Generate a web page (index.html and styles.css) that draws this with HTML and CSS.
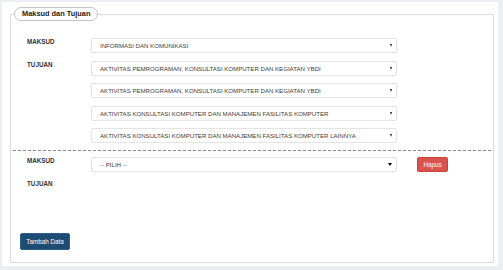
FILE: index.html
```html
<!DOCTYPE html>
<html lang="id">
<head>
    <meta charset="UTF-8">
    <title>Maksud dan Tujuan</title>
    <link rel="stylesheet" href="styles.css">
</head>
<body>
    <div class="sheet">
        <fieldset class="box">
            <legend class="box-title">Maksud dan Tujuan</legend>

            <div class="group">
                <div class="label">MAKSUD</div>
                <div class="select"><span>INFORMASI DAN KOMUNIKASI</span><i class="caret"></i></div>
                <div></div>

                <div class="label">TUJUAN</div>
                <div class="stack">
                    <div class="select"><span>AKTIVITAS PEMROGRAMAN, KONSULTASI KOMPUTER DAN KEGIATAN YBDI</span><i class="caret"></i></div>
                    <div class="select"><span>AKTIVITAS PEMROGRAMAN, KONSULTASI KOMPUTER DAN KEGIATAN YBDI</span><i class="caret"></i></div>
                    <div class="select"><span>AKTIVITAS KONSULTASI KOMPUTER DAN MANAJEMEN FASILITAS KOMPUTER</span><i class="caret"></i></div>
                    <div class="select"><span>AKTIVITAS KONSULTASI KOMPUTER DAN MANAJEMEN FASILITAS KOMPUTER LAINNYA</span><i class="caret"></i></div>
                </div>
                <div></div>
            </div>

            <div class="divider"></div>

            <div class="group">
                <div class="label">MAKSUD</div>
                <div class="select"><span>-- PILIH --</span><i class="caret caret-dark"></i></div>
                <div><button class="btn btn-danger">Hapus</button></div>

                <div class="label">TUJUAN</div>
                <div></div>
                <div></div>
            </div>

            <div class="actions">
                <button class="btn btn-primary">Tambah Data</button>
            </div>
        </fieldset>
    </div>
</body>
</html>
```

FILE: styles.css
```css
html, body {
    margin: 0;
    padding: 0;
}

body {
    background: #eceef2;
    font-family: "Liberation Sans", Arial, sans-serif;
    color: #333;
}

.sheet {
    width: 496px;
    height: 264px;
    margin: 2px;
    padding-top: 5px;
    box-sizing: border-box;
    background: #fff;
}

.box {
    margin: 0 4px 0 8px;
    padding: 17px 16px 12px 16px;
    border: 1px solid #dcdcdc;
    min-width: 0;
}

.box-title {
    margin-left: -13px;
    padding: 0 7px;
    height: 14px;
    box-sizing: border-box;
    border: 1px solid #c4c4c4;
    border-radius: 7px;
    background: #fff;
    font-size: 7.4px;
    font-weight: bold;
    line-height: 12px;
    color: #222;
}

.group {
    display: grid;
    grid-template-columns: 44px 306px auto;
    column-gap: 20px;
    row-gap: 7.5px;
    align-items: start;
}

.stack {
    display: flex;
    flex-direction: column;
    gap: 7.5px;
}

.label {
    font-size: 6.3px;
    font-weight: bold;
    line-height: 8px;
    color: #333;
}

.select {
    display: flex;
    align-items: center;
    justify-content: space-between;
    height: 15px;
    box-sizing: border-box;
    padding: 0 4px 0 8px;
    border: 1px solid #e4e4e4;
    border-radius: 2px;
    background: #fff;
    font-size: 6.1px;
    color: #3c3c3c;
    white-space: nowrap;
}

.caret {
    width: 0;
    height: 0;
    border-left: 1.5px solid transparent;
    border-right: 1.5px solid transparent;
    border-top: 3px solid #222;
}

.caret-dark {
    border-left-width: 2px;
    border-right-width: 2px;
    border-top-width: 3.5px;
    border-top-color: #000;
}

.divider {
    margin: 7px -14px 6px -14px;
    border-top: 1px dashed #8a8a8a;
}

.btn {
    display: block;
    box-sizing: border-box;
    padding: 0;
    border: 1px solid transparent;
    border-radius: 2px;
    font-family: "Liberation Sans", Arial, sans-serif;
    font-size: 6.3px;
    color: #fff;
    cursor: default;
}

.btn-danger {
    width: 31px;
    height: 15px;
    background: #d9534f;
    border-color: #d43f3a;
}

.btn-primary {
    width: 50px;
    height: 17px;
    background: #1e4b73;
    border-color: #2c5f8c;
}

.actions {
    margin: 45px 0 0 -7px;
}
```
